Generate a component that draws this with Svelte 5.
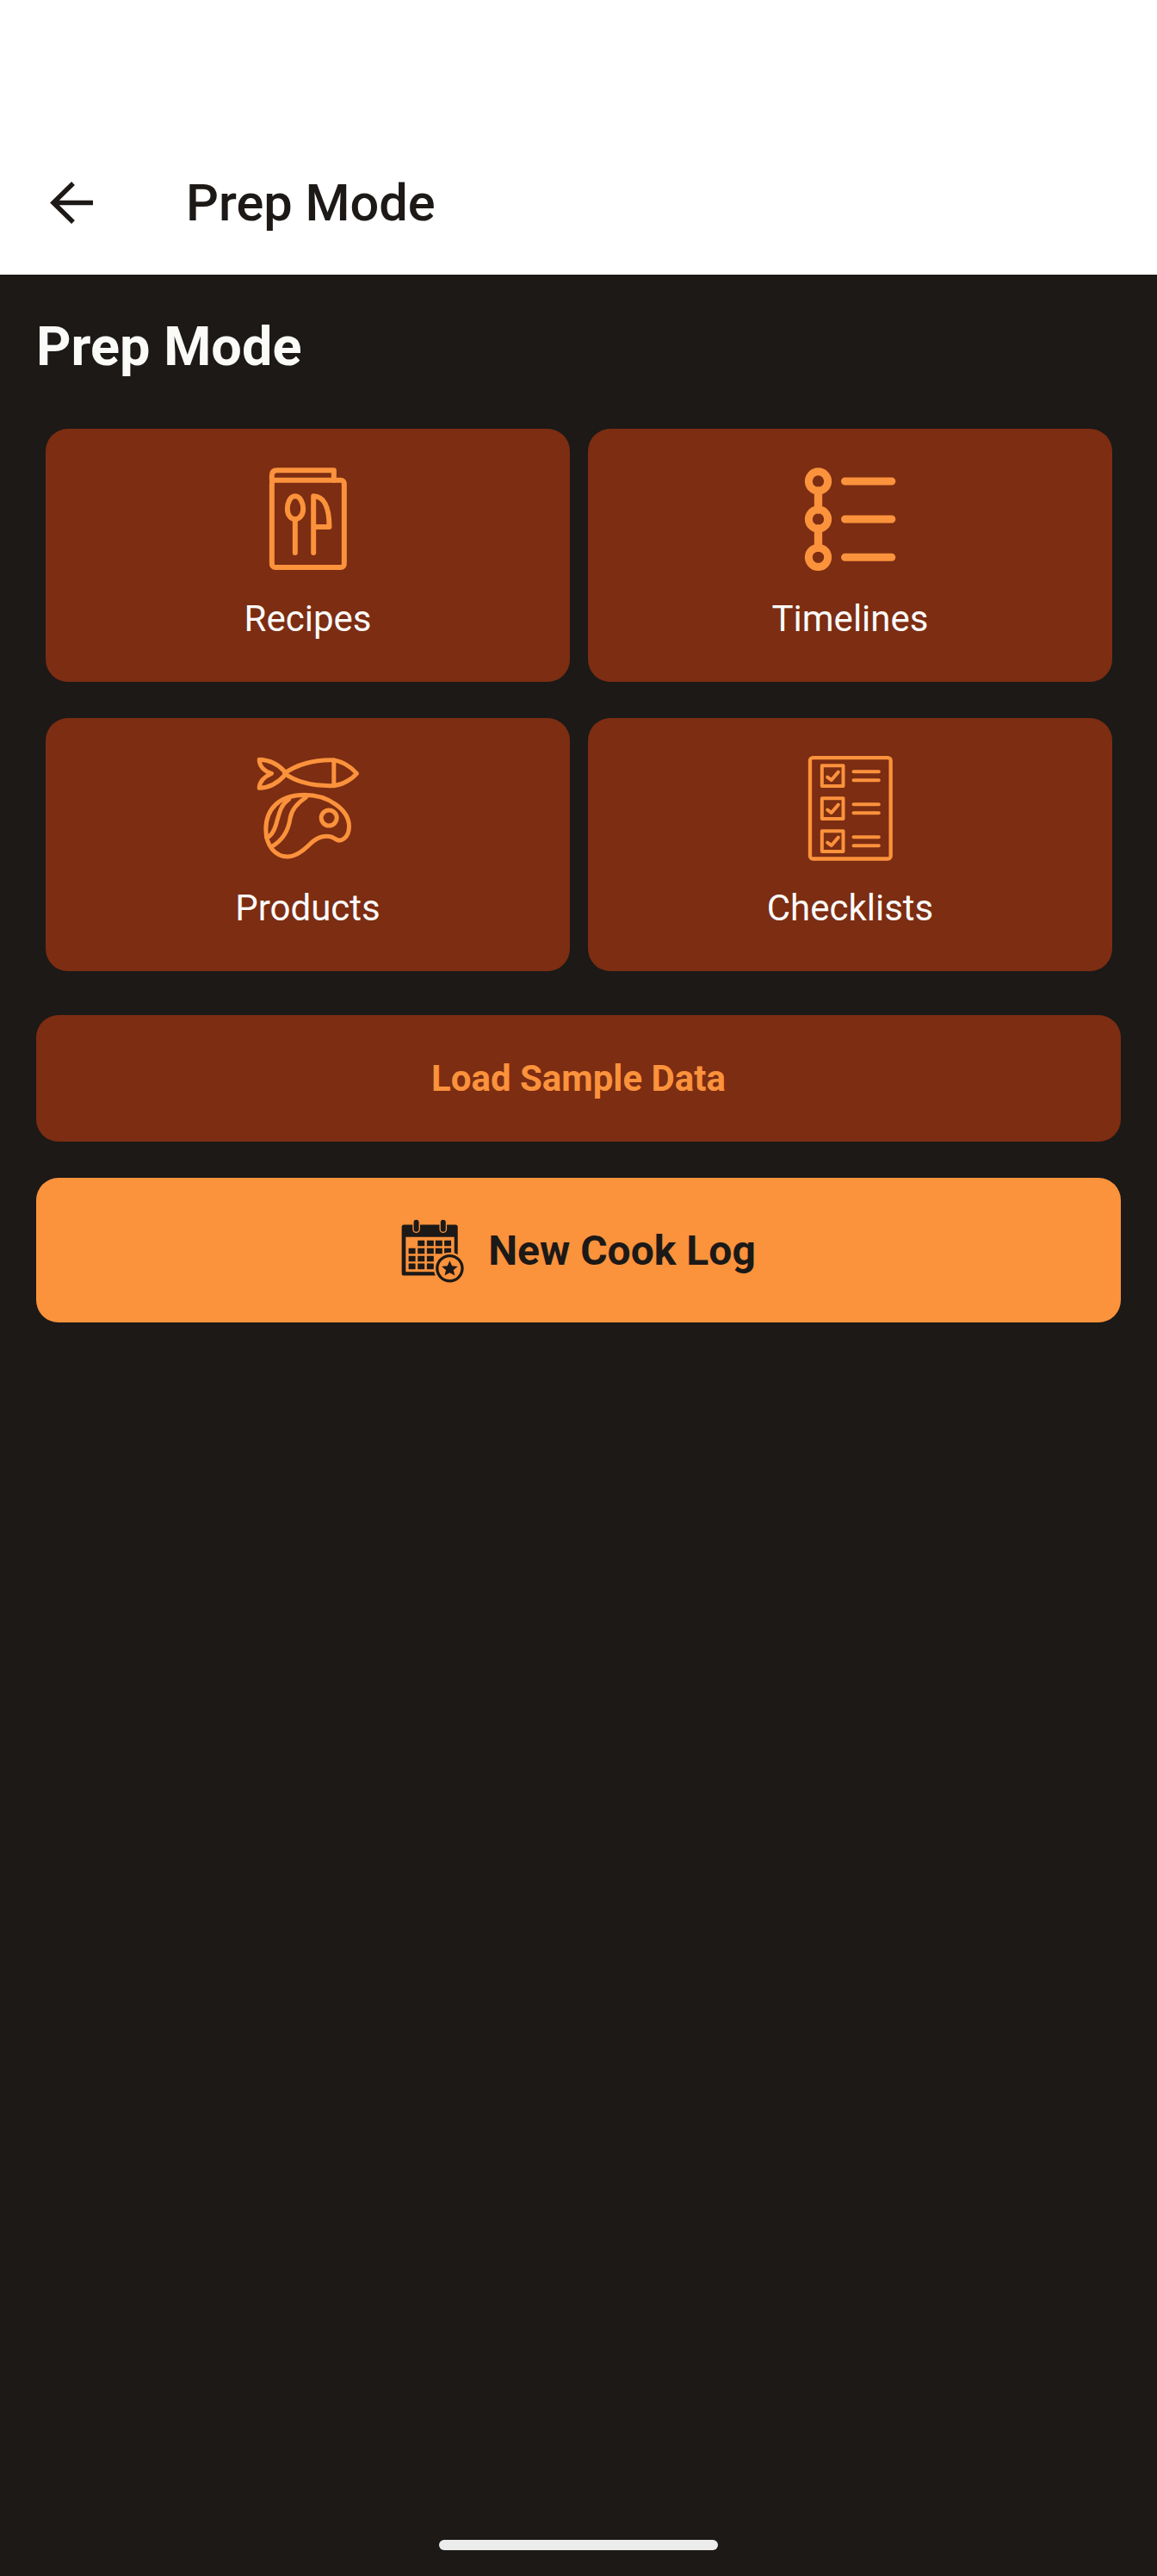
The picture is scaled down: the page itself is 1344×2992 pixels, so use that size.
<script lang="ts">
  const calendarCells = [
    [148, 152], [180, 152], [210, 152], [241, 152],
    [116, 179], [148, 179], [180, 179], [210, 179], [241, 179],
    [116, 206], [148, 206], [180, 206],
    [116, 233], [148, 233], [180, 233]
  ];
  const checkRows = [0, 114, 228];
</script>

<div class="page">
  <header class="appbar">
    <svg class="back" viewBox="0 0 63 63" aria-hidden="true">
      <path d="M56 31.5H10M33 9L10 31.5 33 54" />
    </svg>
    <span class="appbar-title">Prep Mode</span>
  </header>

  <main class="content">
    <h1>Prep Mode</h1>

    <div class="grid">
      <div class="card">
        <svg class="icon" viewBox="73.5 60 378 378" aria-hidden="true">
          <g class="line" stroke-width="18">
            <path d="M136 113V97Q136 79 154 79H352V113" />
            <rect x="136" y="113" width="252" height="304" rx="12" />
            <path d="M217 169C236 169 245 195 245 212C245 235 232 249 217 249C202 249 190 235 190 212C190 195 198 169 217 169Z" />
            <path d="M217 249V366" />
            <path d="M281 366V169C316 169 336 205 336 276H281" />
          </g>
        </svg>
        <span>Recipes</span>
      </div>

      <div class="card">
        <svg class="icon" viewBox="13.5 30 378 378" aria-hidden="true">
          <g class="line" stroke-width="27">
            <path stroke-width="28" d="M90 120V186M90 252V318" />
            <circle cx="90" cy="87" r="33.5" />
            <circle cx="90" cy="219" r="33.5" />
            <circle cx="90" cy="352" r="33.5" />
            <path d="M183 87H346M183 219H346M183 352H346" />
          </g>
        </svg>
        <span>Timelines</span>
      </div>

      <div class="card">
        <svg class="icon" viewBox="43.5 48 378 378" aria-hidden="true">
          <g class="line" stroke-width="15">
            <path d="M150 115C190 85 250 68 310 68C345 68 380 90 402 115C380 140 345 158 310 158C250 158 190 145 150 115Z" />
            <path d="M152 110C130 85 100 68 62 67C62 90 80 108 105 115C80 125 62 145 62 166C100 165 130 145 152 120" />
            <path d="M322 68V158" />
            <path d="M85 310C85 240 130 190 220 190C300 190 375 240 375 300C375 340 345 358 325 342C300 325 265 335 240 360C215 385 190 405 160 405C120 405 85 370 85 310Z" />
            <path d="M165 205C135 225 130 260 120 295C112 320 100 335 88 340" />
            <path d="M225 198C195 218 175 240 170 270C165 305 150 345 105 370" />
            <circle cx="305" cy="270" r="27" />
          </g>
        </svg>
        <span>Products</span>
      </div>

      <div class="card">
        <svg class="icon" viewBox="43.5 48 378 378" aria-hidden="true">
          <g class="line" stroke-width="12">
            <rect x="91.5" y="60.5" width="281" height="352" rx="10" stroke-width="13" />
            {#each checkRows as dy}
              <rect x="133" y={88 + dy} width="74" height="71" />
              <path d={`M152 ${128 + dy}L166 ${138 + dy}L190 ${110 + dy}`} />
              <path d={`M243 ${109 + dy}H331M243 ${139 + dy}H331`} />
            {/each}
          </g>
        </svg>
        <span>Checklists</span>
      </div>
    </div>

    <button class="btn secondary">Load Sample Data</button>

    <button class="btn primary">
      <svg class="calendar" viewBox="90 75 220 225" aria-hidden="true">
        <rect class="dark" x="92" y="97" width="196" height="178" rx="8" />
        <rect class="orange" x="106" y="140" width="170" height="122" />
        {#each calendarCells as [x, y]}
          <rect class="dark" {x} {y} width="24" height="20" rx="1" />
        {/each}
        <rect class="dark" x="132" y="78" width="22" height="46" rx="11" stroke="#fb923c" stroke-width="4" />
        <rect class="dark" x="226" y="78" width="22" height="46" rx="11" stroke="#fb923c" stroke-width="4" />
        <circle class="orange" cx="260" cy="250" r="56" />
        <circle cx="260" cy="250" r="44" fill="none" stroke="#1c1917" stroke-width="10" />
        <path class="dark" d="M260 223L268 241L288 243L273 256L278 275L260 265L242 275L247 256L232 243L252 241Z" />
      </svg>
      <span>New Cook Log</span>
    </button>
  </main>

  <div class="home-indicator"></div>
</div>

<style>
  :global(body) {
    background: #1c1917;
  }

  .page {
    position: relative;
    display: flex;
    flex-direction: column;
    min-height: 2992px;
    background: #1c1917;
    font-family: Roboto, "Liberation Sans", sans-serif;
  }

  .appbar {
    display: flex;
    align-items: center;
    height: 168px;
    padding: 151px 0 0 52px;
    background: #fff;
    color: #1c1917;
  }

  .back {
    width: 63px;
    height: 63px;
    margin-right: 101px;
    fill: none;
    stroke: #1c1917;
    stroke-width: 5.5;
  }

  .appbar-title {
    padding-top: 2px;
    font-size: 59.5px;
    font-weight: 500;
  }

  .content {
    display: flex;
    flex-direction: column;
    padding: 0 42px;
  }

  h1 {
    margin: 47px 0 0;
    color: #fafaf9;
    font-size: 63px;
    font-weight: 700;
    line-height: 74px;
  }

  .grid {
    display: grid;
    grid-template-columns: 1fr 1fr;
    gap: 42px 21px;
    margin: 58px 10px 0 11px;
  }

  .card {
    display: flex;
    flex-direction: column;
    align-items: center;
    height: 294px;
    padding-top: 42px;
    box-sizing: border-box;
    border-radius: 26px;
    background: #7c2d12;
    color: #fafaf9;
    font-size: 42px;
    line-height: 50px;
  }

  .card span {
    margin-top: 28px;
  }

  .icon {
    width: 126px;
    height: 126px;
    flex: none;
  }

  .line {
    fill: none;
    stroke: #fb923c;
    stroke-linecap: round;
    stroke-linejoin: round;
  }

  .btn {
    display: flex;
    align-items: center;
    justify-content: center;
    width: 100%;
    border: 0;
    border-radius: 26px;
    font-family: inherit;
  }

  .secondary {
    height: 147px;
    margin-top: 51px;
    background: #7c2d12;
    color: #fb923c;
    font-size: 42px;
    font-weight: 700;
  }

  .primary {
    gap: 28px;
    height: 168px;
    margin-top: 42px;
    padding-left: 6px;
    background: #fb923c;
    color: #1c1917;
    font-size: 48px;
    font-weight: 700;
  }

  .calendar {
    width: 73px;
    height: 75px;
    flex: none;
  }

  .dark {
    fill: #1c1917;
  }

  .orange {
    fill: #fb923c;
  }

  .home-indicator {
    position: absolute;
    left: 510px;
    bottom: 30px;
    width: 324px;
    height: 12px;
    border-radius: 6px;
    background: #ececec;
  }
</style>
